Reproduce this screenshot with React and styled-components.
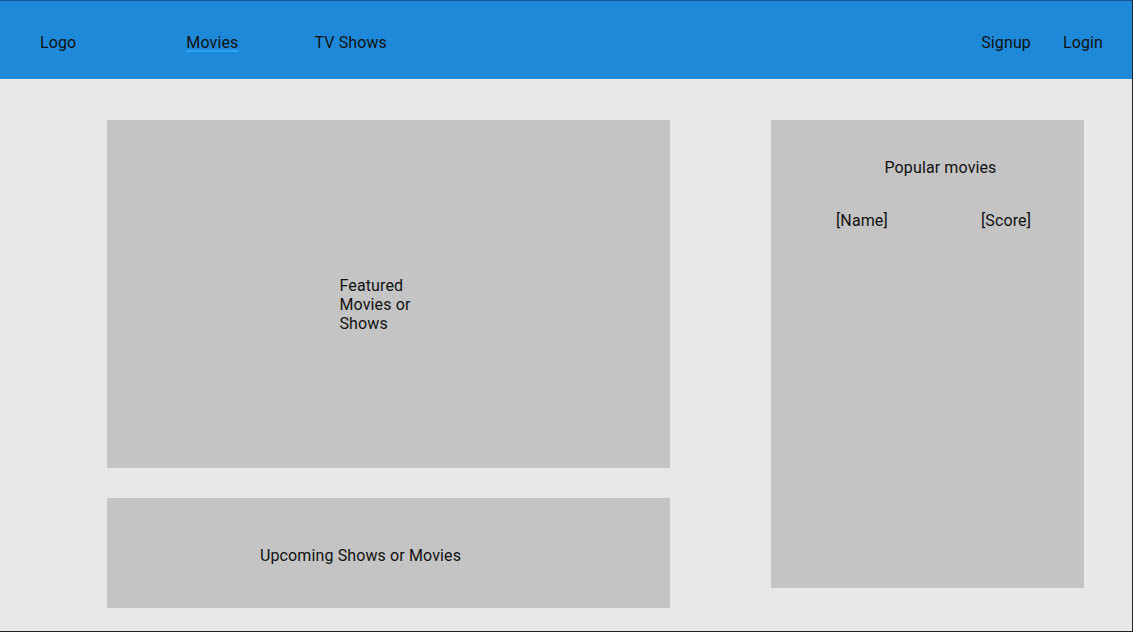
import React from "react";
import styled, { createGlobalStyle } from "styled-components";

const GlobalStyle = createGlobalStyle`
  * { box-sizing: border-box; }
  body {
    margin: 0;
    font-family: Roboto, "Liberation Sans", sans-serif;
    letter-spacing: 0.12px;
    color: #111;
  }
`;

const Frame = styled.div`
  width: 1133px;
  height: 632px;
  background: #e8e8e8;
  border-right: 1px solid #222;
  border-bottom: 1px solid #222;
  display: flex;
  flex-direction: column;
  overflow: hidden;
`;

const NavBar = styled.nav`
  height: 79px;
  flex-shrink: 0;
  background: #1e89d8;
  border-top: 1px solid #1a5490;
  display: flex;
  align-items: center;
  padding: 4px 29px 0 40px;
  font-size: 16px;
`;

const NavItem = styled.a`
  color: #111;
  text-decoration: none;
  margin-right: ${(p) => p.$gap || 0}px;
  ${(p) =>
    p.$active &&
    `
    text-decoration: underline;
    text-decoration-color: #2aa3f7;
    text-decoration-thickness: 2px;
    text-underline-offset: 2px;
  `}
`;

const Spacer = styled.div`
  flex: 1;
`;

const Main = styled.main`
  display: flex;
  gap: 101px;
  padding: 41px 0 0 107px;
`;

const LeftColumn = styled.div`
  display: flex;
  flex-direction: column;
  gap: 30px;
  width: 563px;
`;

const Panel = styled.section`
  background: #c4c4c4;
  height: ${(p) => p.$height}px;
  font-size: 16px;
  line-height: 19px;
`;

const FeaturedPanel = styled(Panel)`
  display: flex;
  justify-content: center;
  align-items: center;
  padding-top: 20px;
`;

const FeaturedText = styled.p`
  margin: 0;
  width: 98px;
`;

const UpcomingPanel = styled(Panel)`
  display: flex;
  align-items: center;
  padding: 5px 0 0 153px;
`;

const PopularPanel = styled(Panel)`
  width: 313px;
  padding-top: 38px;
`;

const PopularTitle = styled.h3`
  margin: 0 0 34px;
  font-weight: 400;
  font-size: 16px;
  text-align: center;
  padding-left: 26px;
`;

const ScoreRow = styled.div`
  display: grid;
  grid-template-columns: 145px auto;
  padding-left: 65px;
`;

export default function App() {
  return (
    <>
      <GlobalStyle />
      <Frame>
        <NavBar>
          <NavItem $gap={110}>Logo</NavItem>
          <NavItem $active $gap={76}>Movies</NavItem>
          <NavItem>TV Shows</NavItem>
          <Spacer />
          <NavItem $gap={32}>Signup</NavItem>
          <NavItem>Login</NavItem>
        </NavBar>
        <Main>
          <LeftColumn>
            <FeaturedPanel $height={348}>
              <FeaturedText>Featured Movies or Shows</FeaturedText>
            </FeaturedPanel>
            <UpcomingPanel $height={110}>Upcoming Shows or Movies</UpcomingPanel>
          </LeftColumn>
          <PopularPanel $height={468}>
            <PopularTitle>Popular movies</PopularTitle>
            <ScoreRow>
              <span>[Name]</span>
              <span>[Score]</span>
            </ScoreRow>
          </PopularPanel>
        </Main>
      </Frame>
    </>
  );
}
